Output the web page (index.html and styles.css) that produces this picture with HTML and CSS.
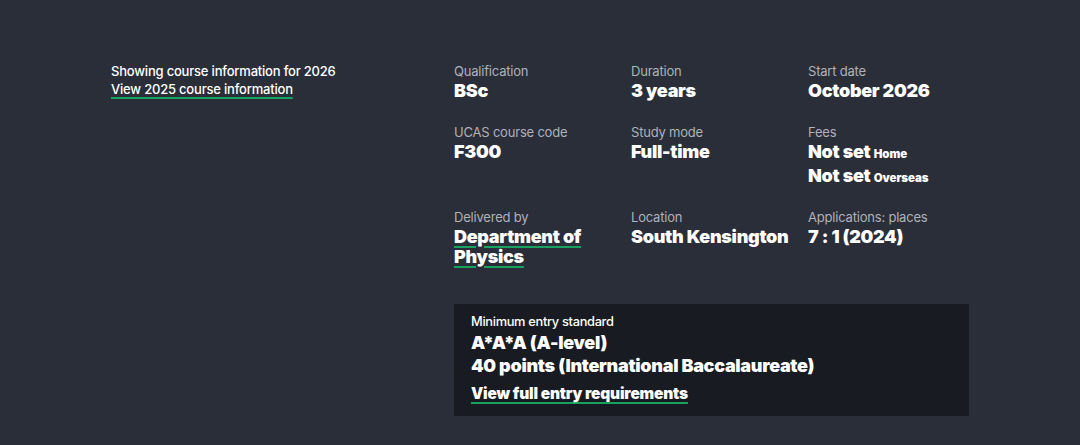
FILE: index.html
```html
<!DOCTYPE html>
<html lang="en">
<head>
<meta charset="utf-8">
<title>Course information</title>
<link rel="stylesheet" href="styles.css">
</head>
<body>
<main class="page">
  <aside class="intro">
    <p class="intro-text">Showing course information for 2026</p>
    <a class="intro-link" href="#">View 2025 course information</a>
  </aside>
  <section class="details">
    <div class="facts">
      <div class="fact">
        <div class="label">Qualification</div>
        <div class="value">BSc</div>
      </div>
      <div class="fact">
        <div class="label">Duration</div>
        <div class="value">3 years</div>
      </div>
      <div class="fact">
        <div class="label">Start date</div>
        <div class="value">October 2026</div>
      </div>
      <div class="fact">
        <div class="label">UCAS course code</div>
        <div class="value">F300</div>
      </div>
      <div class="fact">
        <div class="label">Study mode</div>
        <div class="value">Full-time</div>
      </div>
      <div class="fact">
        <div class="label">Fees</div>
        <div class="value">Not set <span class="small">Home</span></div>
        <div class="value fee-next">Not set <span class="small">Overseas</span></div>
      </div>
      <div class="fact">
        <div class="label">Delivered by</div>
        <div class="value"><a class="value-link" href="#">Department of Physics</a></div>
      </div>
      <div class="fact">
        <div class="label">Location</div>
        <div class="value">South Kensington</div>
      </div>
      <div class="fact">
        <div class="label">Applications: places</div>
        <div class="value">7 : 1 (2024)</div>
      </div>
    </div>
    <div class="entry">
      <div class="entry-label">Minimum entry standard</div>
      <div class="entry-value">A*A*A (A-level)</div>
      <div class="entry-value">40 points (International Baccalaureate)</div>
      <a class="entry-link" href="#">View full entry requirements</a>
    </div>
  </section>
</main>
</body>
</html>
```

FILE: styles.css
```css
* { box-sizing: border-box; }
html, body {
  margin: 0;
  padding: 0;
  background: #2a2e38;
  color: #ffffff;
  font-family: Inter, "Noto Sans", "Liberation Sans", sans-serif;
}
.page {
  display: flex;
  padding: 62px 0 0 111px;
  min-height: 445px;
}
.intro {
  width: 343px;
  flex: none;
}
.intro-text {
  margin: 0;
  font-size: 13px;
  line-height: 19px;
  font-weight: 500;
  letter-spacing: -0.2px;
}
.intro-link {
  display: block;
  width: max-content;
  color: #ffffff;
  font-size: 13px;
  line-height: 17px;
  font-weight: 500;
  letter-spacing: -0.2px;
  text-decoration: underline;
  text-decoration-color: #17a35f;
  text-decoration-thickness: 2px;
  text-underline-offset: 3px;
}
.details {
  display: flex;
  flex-direction: column;
}
.facts {
  display: grid;
  grid-template-columns: 177px 177px 177px;
  row-gap: 22px;
}
.label {
  font-size: 13px;
  line-height: 19px;
  color: #aeb2ba;
  letter-spacing: -0.2px;
}
.value {
  font-size: 18px;
  line-height: 20px;
  font-weight: 900;
  letter-spacing: -0.3px;
}
.fee-next { margin-top: 4px; }
.small {
  font-size: 11.5px;
  line-height: 1;
  font-weight: 900;
  letter-spacing: -0.1px;
}
.value-link {
  color: #ffffff;
  text-decoration: underline;
  text-decoration-color: #17a35f;
  text-decoration-thickness: 2px;
  text-underline-offset: 3px;
}
.entry {
  margin-top: 37px;
  width: 515px;
  background: #181b21;
  padding: 9px 17px 12px;
}
.entry-label {
  font-size: 12.8px;
  line-height: 18px;
  font-weight: 500;
  letter-spacing: -0.3px;
}
.entry-value {
  font-size: 18px;
  line-height: 23px;
  font-weight: 900;
  letter-spacing: -0.3px;
}
.entry-link {
  display: inline-block;
  margin-top: 7px;
  color: #ffffff;
  font-size: 15.5px;
  line-height: 20px;
  font-weight: 900;
  letter-spacing: -0.2px;
  text-decoration: underline;
  text-decoration-color: #17a35f;
  text-decoration-thickness: 2px;
  text-underline-offset: 3px;
}
```
